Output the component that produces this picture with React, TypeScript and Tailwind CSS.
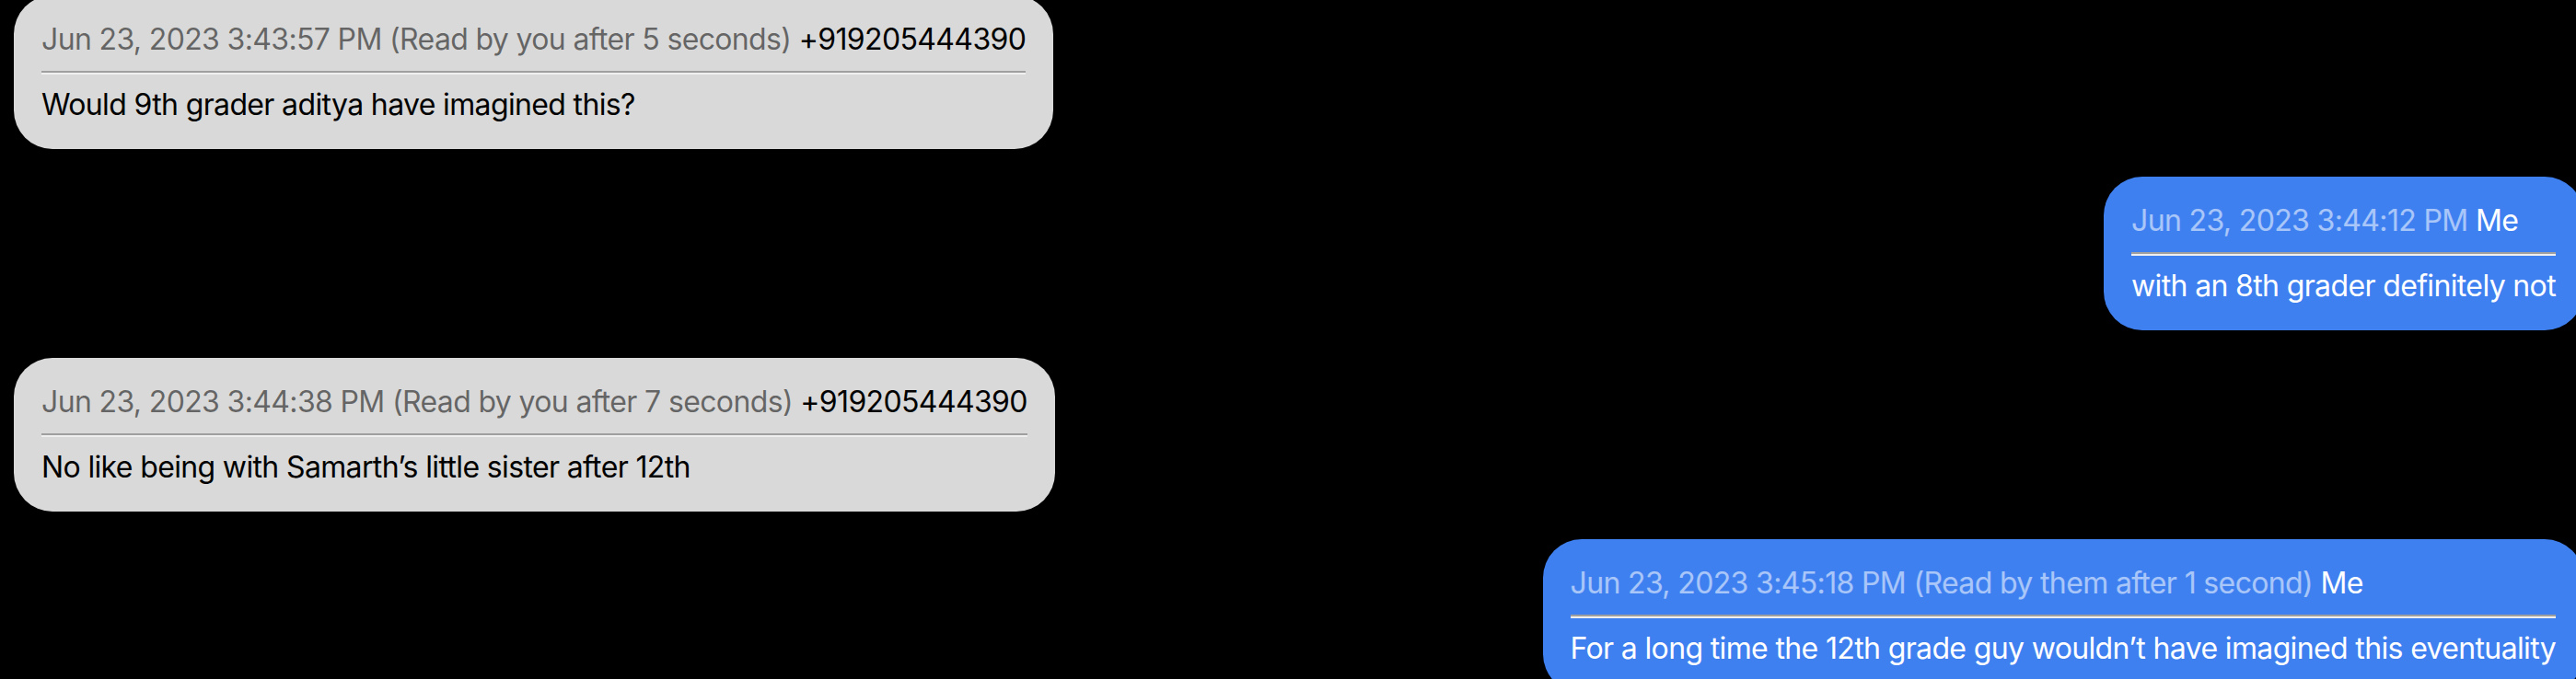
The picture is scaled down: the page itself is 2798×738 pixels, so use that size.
import React from "react";

type Message = {
  time: string;
  read?: string;
  sender: string;
  text: string;
  mine: boolean;
};

const messages: Message[] = [
  {
    time: "Jun 23, 2023 3:43:57 PM",
    read: "(Read by you after 5 seconds)",
    sender: "+919205444390",
    text: "Would 9th grader aditya have imagined this?",
    mine: false,
  },
  {
    time: "Jun 23, 2023 3:44:12 PM",
    sender: "Me",
    text: "with an 8th grader definitely not",
    mine: true,
  },
  {
    time: "Jun 23, 2023 3:44:38 PM",
    read: "(Read by you after 7 seconds)",
    sender: "+919205444390",
    text: "No like being with Samarth\u2019s little sister after 12th",
    mine: false,
  },
  {
    time: "Jun 23, 2023 3:45:18 PM",
    read: "(Read by them after 1 second)",
    sender: "Me",
    text: "For a long time the 12th grade guy wouldn\u2019t have imagined this eventuality",
    mine: true,
  },
];

const Bubble = ({ msg }: { msg: Message }) => {
  return (
    <div
      className={
        msg.mine
          ? "w-fit rounded-[42px] bg-[#3f80f1] px-[30px] py-6 text-white"
          : "w-fit rounded-[42px] bg-[#d9d9d9] px-[30px] py-6 text-black"
      }
    >
      <div className="whitespace-nowrap text-[32px] leading-[48px] tracking-[-0.02em]">
        <span className={msg.mine ? "text-white/55" : "text-black/55"}>
          {msg.time}
          {msg.read ? " " + msg.read : ""}
        </span>{" "}
        <span>{msg.sender}</span>
      </div>
      <div className="mt-[10px] mb-[9px] h-1 border-t-2 border-b-2 border-t-[#9f9f9f] border-b-[#efefef]" />
      <div className="whitespace-nowrap text-[32px] leading-[48px] tracking-[-0.02em]">{msg.text}</div>
    </div>
  );
};

export default function App() {
  return (
    <div
      className="h-[738px] w-full overflow-hidden bg-black"
      style={{ fontFamily: "Inter, 'Noto Sans', sans-serif" }}
    >
      <div className="-mt-[5px] flex flex-col gap-[30px]">
        {messages.map((m, i) => (
          <div key={i} className={m.mine ? "flex justify-end -mr-2" : "flex justify-start ml-[15px]"}>
            <Bubble msg={m} />
          </div>
        ))}
      </div>
    </div>
  );
}
